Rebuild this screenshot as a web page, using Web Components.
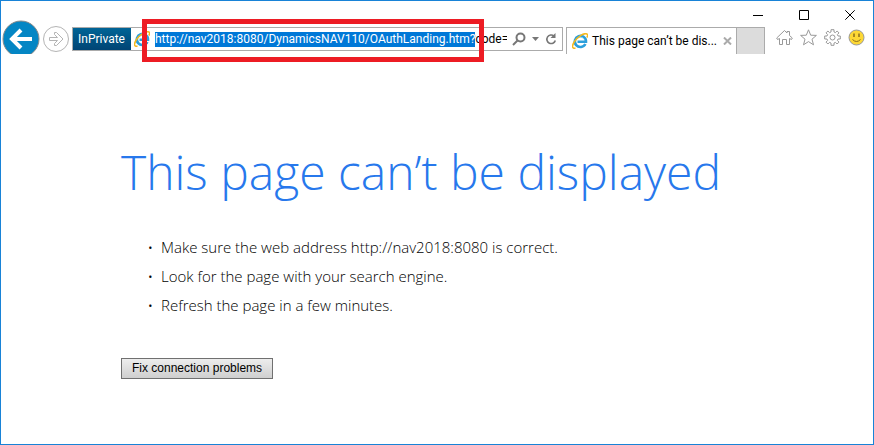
<!DOCTYPE html>
<html lang="en">
<head>
<meta charset="utf-8">
<title>This page can’t be displayed</title>
<style>
  body {
    margin: 0;
    background: #fff;
    color: #000;
    font: 12px/15px Roboto, "Open Sans", sans-serif;
  }
</style>
</head>
<body>
<browser-window>
  <caption-buttons slot="caption"></caption-buttons>
  <history-buttons slot="toolbar"></history-buttons>
  <address-bar slot="toolbar" url="http://nav2018:8080/DynamicsNAV110/OAuthLanding.htm?" query="code=AQABAAIAAAD"></address-bar>
  <tab-strip slot="toolbar">This page can’t be dis...</tab-strip>
  <browser-tools slot="toolbar"></browser-tools>
  <error-page>
    <span slot="title">This page can’t be displayed</span>
    <li>Make sure the web address http://nav2018:8080 is correct.</li>
    <li>Look for the page with your search engine.</li>
    <li>Refresh the page in a few minutes.</li>
    <span slot="action">Fix connection problems</span>
  </error-page>
</browser-window>

<script>
/**
 * Creates a template element from markup.
 *
 * @param {string} markup - The markup of the template.
 * @returns {HTMLTemplateElement} The template.
 */
function createTemplate (markup) {
  const template = document.createElement('template')
  template.innerHTML = markup
  return template
}

const buttonReset = `
  button {
    display: flex;
    align-items: center;
    justify-content: center;
    margin: 0;
    padding: 0;
    border: 0;
    background: none;
    font: inherit;
    color: inherit;
  }
  svg { display: block; }
`

/**
 * Base for elements that only clone their template.
 */
class TemplateElement extends HTMLElement {
  /**
   * Creates an instance of the current type.
   */
  constructor () {
    super()

    this.attachShadow({ mode: 'open' })
      .appendChild(this.constructor.template.content.cloneNode(true))
  }
}

customElements.define('browser-window',
  /**
   * Represents the window frame.
   */
  class extends TemplateElement {
    static template = createTemplate(`
      <style>
        :host {
          display: flex;
          flex-direction: column;
          box-sizing: border-box;
          min-height: 100vh;
          border: 1px solid #1883d7;
        }
        header {
          display: flex;
          flex-direction: column;
        }
        nav {
          display: flex;
          align-items: flex-start;
          height: 34px;
        }
        main { flex: 1; }
      </style>
      <header>
        <slot name="caption"></slot>
        <nav><slot name="toolbar"></slot></nav>
      </header>
      <main><slot></slot></main>
    `)
  }
)

customElements.define('caption-buttons',
  /**
   * Represents the minimize, maximize and close buttons.
   */
  class extends TemplateElement {
    static template = createTemplate(`
      <style>
        ${buttonReset}
        :host {
          display: flex;
          justify-content: flex-end;
          padding-top: 9px;
        }
        button { width: 46px; height: 10px; }
        svg { fill: none; stroke: #000; }
      </style>
      <button aria-label="Minimize"><svg width="10" height="10"><path d="M0 5.5H10"/></svg></button>
      <button aria-label="Maximize"><svg width="10" height="10"><path d="M.5 .5H9.5V9.5H.5Z"/></svg></button>
      <button aria-label="Close"><svg width="10" height="10"><path d="M.3 .3L9.7 9.7M9.7 .3L.3 9.7"/></svg></button>
    `)
  }
)

customElements.define('history-buttons',
  /**
   * Represents the back and forward buttons.
   */
  class extends TemplateElement {
    static template = createTemplate(`
      <style>
        ${buttonReset}
        :host {
          display: flex;
          flex: none;
          align-items: flex-start;
          gap: 2px;
          padding: 0 2px 0 1px;
        }
        .forward { height: 38px; }
      </style>
      <button class="back" aria-label="Back">
        <svg width="38" height="34">
          <circle cx="19" cy="19" r="18" fill="#0486c4" stroke="#8a8a8a"/>
          <path d="M30 19H11M19 10L10 19L19 28" fill="none" stroke="#fff" stroke-width="4"/>
        </svg>
      </button>
      <button class="forward" aria-label="Forward">
        <svg width="28" height="28" fill="none" stroke="#b4b4b4">
          <circle cx="14" cy="14" r="12.5"/>
          <path d="M7.500 12.500H15.500L12.500 9.500V7.500H14.500L21 14L14.500 20.500H12.500V18.500L15.500 15.500H7.500Z"/>
        </svg>
      </button>
    `)
  }
)

customElements.define('ie-logo',
  /**
   * Represents the browser's logo.
   */
  class extends TemplateElement {
    static template = createTemplate(`
      <style>
        :host { display: block; flex: none; }
        svg { display: block; }
      </style>
      <svg width="16" height="16" viewBox="0 0 16 16" fill="none">
        <path d="M13.400 11A5.600 5.600 0 1 1 14 8.800H5.500" stroke="#2b9fdc" stroke-width="2.600"/>
        <path d="M4.500 6.500A4.500 4.500 0 0 1 12 6" stroke="#7fd6f7"/>
        <path d="M3.500 15C0 16-.5 13 2.500 8.500C6 3.500 12-.5 15 1C16 1.800 15.500 3.500 14.800 4.500" stroke="#f4b81c" stroke-width="1.500"/>
      </svg>
    `)
  }
)

customElements.define('address-bar',
  /**
   * Represents the address bar with its selected url.
   */
  class extends TemplateElement {
    static template = createTemplate(`
      <style>
        ${buttonReset}
        :host {
          position: relative;
          display: flex;
          flex: 1;
          align-items: center;
          box-sizing: border-box;
          min-width: 0;
          height: 24px;
          margin-top: 7px;
          border: 1px solid #ababab;
        }
        .badge {
          align-self: stretch;
          padding: 4px 6px 3px 5px;
          background: linear-gradient(#006496, #004474);
          color: #fff;
        }
        ie-logo { margin: 0 5px 0 3px; }
        input {
          flex: 1;
          min-width: 0;
          height: 15px;
          padding: 0;
          border: 0;
          outline: 0;
          background: none;
          color: #000;
          font: inherit;
        }
        input::selection { background: #0078d7; color: #fff; }
        .actions {
          display: flex;
          align-items: center;
          gap: 6px;
          padding: 0 5px;
        }
        .highlight {
          position: absolute;
          top: -9px;
          left: 69px;
          right: 78px;
          height: 33px;
          border: 5px solid #ed1c24;
          pointer-events: none;
        }
      </style>
      <span class="badge">InPrivate</span>
      <ie-logo></ie-logo>
      <input type="text" aria-label="Address" spellcheck="false">
      <div class="actions">
        <button aria-label="Search"><svg width="14" height="14" fill="none" stroke="#777" stroke-width="2"><circle cx="8.500" cy="5.500" r="4"/><path d="M5.500 8.500L1 13"/></svg></button>
        <button aria-label="Show address list"><svg width="7" height="4"><path d="M0 0H7L3.500 4Z" fill="#777"/></svg></button>
        <button aria-label="Refresh"><svg width="12" height="14" fill="none"><path d="M9 4A4.300 4.300 0 1 0 10.300 8.500" stroke="#777" stroke-width="1.600"/><path d="M10.500 1V6H5.500Z" fill="#777"/></svg></button>
      </div>
      <div class="highlight"></div>
    `)

    /**
     * Fills the text box and selects the url up to its query.
     */
    connectedCallback () {
      const url = this.getAttribute('url')
      const input = this.shadowRoot.querySelector('input')
      input.value = url + this.getAttribute('query')
      input.focus()
      input.setSelectionRange(0, url.length, 'backward')
      input.scrollLeft = 0
    }
  }
)

customElements.define('tab-strip',
  /**
   * Represents the open tab and the new tab button.
   */
  class extends TemplateElement {
    static template = createTemplate(`
      <style>
        ${buttonReset}
        :host {
          display: flex;
          flex: none;
          box-sizing: border-box;
          height: 27px;
          margin: 7px 0 0 3px;
          border: solid #ababab;
          border-width: 1px 1px 0;
        }
        .tab {
          display: flex;
          align-items: center;
          gap: 4px;
          padding: 0 4px 0 5px;
        }
        .close { margin-left: 2px; }
        .new { width: 28px; border-left: 1px solid #ababab; background: #dcdcdc; }
      </style>
      <div class="tab">
        <ie-logo></ie-logo>
        <span><slot></slot></span>
        <button class="close" aria-label="Close tab"><svg width="9" height="8"><path d="M1 .5L8 7.500M8 .5L1 7.500" stroke="#aaa" stroke-width="2"/></svg></button>
      </div>
      <button class="new" aria-label="New tab"></button>
    `)
  }
)

customElements.define('browser-tools',
  /**
   * Represents the home, favorites, tools and feedback buttons.
   */
  class extends TemplateElement {
    static template = createTemplate(`
      <style>
        ${buttonReset}
        :host {
          display: flex;
          flex: none;
          gap: 7px;
          padding: 9px 8px 0 11px;
        }
        svg { fill: none; stroke: #999; }
      </style>
      <button aria-label="Home"><svg width="17" height="17"><path d="M3.500 9.500L1.500 10.500L.7 9L8.500 1.500L11 4V2.500H13.500V6.500L16.300 9L15.500 10.500L13.500 9.500V15.500H10.500V10.500H6.500V15.500H3.500Z"/></svg></button>
      <button aria-label="Favorites"><svg width="17" height="17"><path d="M8.500 .8L10.700 6.200L16.400 6.400L12 10.200L13.500 15.800L8.500 12.600L3.500 15.800L5 10.200L.6 6.400L6.300 6.200Z"/></svg></button>
      <button aria-label="Tools"><svg width="17" height="17"><path d="M7 .7H10V3L11.500 3.600L13.100 2L15 3.900L13.400 5.500L14 7H16.300V10H14L13.400 11.500L15 13.100L13.100 15L11.500 13.400L10 14V16.300H7V14L5.500 13.400L3.900 15L2 13.100L3.600 11.500L3 10H.7V7H3L3.600 5.500L2 3.900L3.900 2L5.500 3.600L7 3Z"/><circle cx="8.500" cy="8.500" r="2.500"/></svg></button>
      <button aria-label="Send a smile"><svg width="17" height="17"><circle cx="8.500" cy="8.500" r="7.500" fill="#fdd835"/><path d="M6 4.500V8M11 4.500V8" stroke="#8a6d1c" stroke-width="1.500"/><path d="M4.500 10.500Q8.500 14.500 12.500 10.500" stroke="#8a6d1c"/></svg></button>
    `)
  }
)

customElements.define('error-page',
  /**
   * Represents the error page shown in the window.
   */
  class extends TemplateElement {
    static template = createTemplate(`
      <style>
        ${buttonReset}
        :host {
          display: block;
          padding: 84px 120px 24px;
          font-family: "Open Sans", "Noto Sans", sans-serif;
        }
        h1 {
          margin: 0;
          color: #2778ec;
          font-size: 48px;
          font-weight: 300;
          line-height: 68px;
        }
        ul {
          margin: 27px 0 38px;
          padding-left: 40px;
          font-size: 15px;
          font-weight: 300;
          line-height: 29px;
          list-style-type: "•  ";
        }
        button {
          height: 21px;
          padding: 0 10px;
          border: 1px solid #707070;
          background: linear-gradient(#ededed, #cfcfcf);
          font: 12px/15px "Liberation Sans", sans-serif;
        }
      </style>
      <h1><slot name="title"></slot></h1>
      <ul><slot></slot></ul>
      <button><slot name="action"></slot></button>
    `)
  }
)
</script>
</body>
</html>
